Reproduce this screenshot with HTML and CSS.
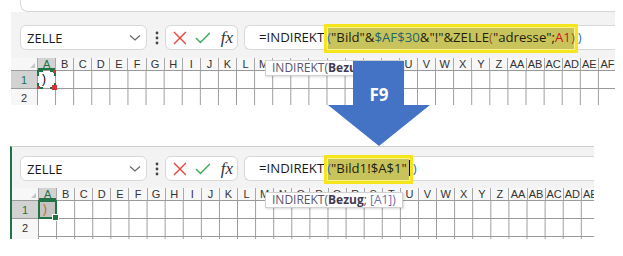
FILE: index.html
```html
<!DOCTYPE html>
<html lang="de">
<head>
  <meta charset="UTF-8" />
  <title>INDIREKT F9</title>
  <link rel="stylesheet" href="styles.css">
</head>
<body>

<div class="shot">
  <div class="ribbon-edge"></div>

  <section class="sheet sheet-top">
    <div class="fbar">
      <div class="namebox">
        <span>ZELLE</span>
        <svg class="chev" width="12" height="8" viewBox="0 0 12 8"><path d="M1 1.5 L6 6 L11 1.5" fill="none" stroke="#666" stroke-width="1.2"/></svg>
      </div>
      <svg class="dots" width="4" height="14" viewBox="0 0 4 14"><circle cx="2" cy="2" r="1.4" fill="#444"/><circle cx="2" cy="7" r="1.4" fill="#444"/><circle cx="2" cy="12" r="1.4" fill="#444"/></svg>
      <div class="fxbox">
        <svg width="14" height="14" viewBox="0 0 14 14"><path d="M1 1 L13 13 M13 1 L1 13" stroke="#e8483f" stroke-width="1.4"/></svg>
        <svg width="16" height="12" viewBox="0 0 16 12"><path d="M1 6 L5.5 10.5 L15 1" fill="none" stroke="#3fa85a" stroke-width="1.4"/></svg>
        <i class="fx">fx</i>
      </div>
      <div class="formula">=INDIREKT<span class="mark"><span class="c-blue">(</span>"Bild"&amp;<span class="c-teal">$AF$30</span>&amp;"!"&amp;ZELLE<span class="c-brown">(</span>"adresse";<span class="c-red">A1</span><span class="c-brown">)</span></span><span class="c-blue close">)</span></div>
    </div>
    <div class="grid">
      <div class="colhead">
        <span class="corner"><i></i></span>
        <span class="sel">A</span><span>B</span><span>C</span><span>D</span><span>E</span><span>F</span><span>G</span><span>H</span><span>I</span><span>J</span><span>K</span><span>L</span><span>M</span><span>N</span><span>O</span><span>P</span><span>Q</span><span>R</span><span>S</span><span>T</span><span>U</span><span>V</span><span>W</span><span>X</span><span>Y</span><span>Z</span><span>AA</span><span>AB</span><span>AC</span><span>AD</span><span>AE</span><span>AF</span>
      </div>
      <div class="rows">
        <div class="rowhead"><span class="sel">1</span><span>2</span></div>
        <div class="cells">
          <div class="a1 a1-edit">)<i class="corner-bl"></i></div>
        </div>
      </div>
    </div>
  </section>

  <section class="sheet sheet-bottom">
    <div class="fbar">
      <div class="namebox">
        <span>ZELLE</span>
        <svg class="chev" width="12" height="8" viewBox="0 0 12 8"><path d="M1 1.5 L6 6 L11 1.5" fill="none" stroke="#666" stroke-width="1.2"/></svg>
      </div>
      <svg class="dots" width="4" height="14" viewBox="0 0 4 14"><circle cx="2" cy="2" r="1.4" fill="#444"/><circle cx="2" cy="7" r="1.4" fill="#444"/><circle cx="2" cy="12" r="1.4" fill="#444"/></svg>
      <div class="fxbox">
        <svg width="14" height="14" viewBox="0 0 14 14"><path d="M1 1 L13 13 M13 1 L1 13" stroke="#e8483f" stroke-width="1.4"/></svg>
        <svg width="16" height="12" viewBox="0 0 16 12"><path d="M1 6 L5.5 10.5 L15 1" fill="none" stroke="#3fa85a" stroke-width="1.4"/></svg>
        <i class="fx">fx</i>
      </div>
      <div class="formula">=INDIREKT<span class="mark"><span class="c-blue">(</span>"Bild1!$A$1"<span class="caret"></span></span><span class="c-blue close">)</span></div>
    </div>
    <div class="grid">
      <div class="colhead">
        <span class="corner"><i></i></span>
        <span class="sel">A</span><span>B</span><span>C</span><span>D</span><span>E</span><span>F</span><span>G</span><span>H</span><span>I</span><span>J</span><span>K</span><span>L</span><span>M</span><span>N</span><span>O</span><span>P</span><span>Q</span><span>R</span><span>S</span><span>T</span><span>U</span><span>V</span><span>W</span><span>X</span><span>Y</span><span>Z</span><span>AA</span><span>AB</span><span>AC</span><span>AD</span><span>AE</span>
      </div>
      <div class="rows">
        <div class="rowhead"><span class="sel">1</span><span>2</span></div>
        <div class="cells">
          <div class="a1 a1-done">)</div>
        </div>
      </div>
    </div>
  </section>

  <!-- overlays -->
  <div class="tip tip-top">INDIREKT(<b>Bezug</b>; <span class="opt">[A1])</span></div>
  <div class="tip tip-bottom">INDIREKT(<b>Bezug</b>; <span class="opt">[A1])</span></div>

  <svg class="arrow" width="102" height="85" viewBox="0 0 102 85">
    <polygon points="25,0 76,0 76,44 102,44 51,85 0,44 25,44" fill="#4472c4"/>
    <text x="51" y="40" text-anchor="middle">F9</text>
  </svg>
</div>

</body>
</html>
```

FILE: styles.css
```css
body {
  margin: 0;
  background: #fff;
  font-family: "Open Sans", "Noto Sans", sans-serif;
  color: #222;
}
.shot {
  position: relative;
  width: 623px;
  height: 256px;
  overflow: hidden;
}
.ribbon-edge {
  height: 12px;
  margin-left: 20px;
  width: 595px;
  box-sizing: border-box;
  border-left: 1px solid #d6d6d6;
  border-bottom: 1px solid #d6d6d6;
  border-bottom-left-radius: 8px;
}
.sheet {
  margin-left: 11px;
  overflow: hidden;
}
.sheet-top {
  width: 604px;
  height: 93px;
}
.sheet-bottom {
  width: 582px;
  height: 92px;
  margin-top: 41px;
  border-left: 2px solid #217346;
  margin-left: 10px;
  border-top: 1px solid #d0d0d0;
}

/* formula bar */
.fbar {
  display: flex;
  align-items: flex-start;
  background: #f3f3f3;
  height: 46px;
  box-sizing: border-box;
  padding: 13px 0 0 9px;
}
.sheet-bottom .fbar {
  height: 41px;
  padding-top: 9px;
  padding-left: 8px;
}
.namebox {
  width: 127px;
  height: 25px;
  box-sizing: border-box;
  background: #fff;
  border: 1px solid #d8d8d8;
  border-radius: 6px;
  display: flex;
  align-items: center;
  justify-content: space-between;
  padding: 0 5px 0 6px;
  font-size: 13px;
  color: #1a1a1a;
}
.dots {
  margin: 6px 6px 0 8px;
}
.fxbox {
  width: 73px;
  height: 25px;
  box-sizing: border-box;
  background: #fff;
  border: 1px solid #d8d8d8;
  border-radius: 6px;
  display: flex;
  align-items: center;
  padding: 0 4px 0 7px;
  gap: 8px;
}
.fx {
  font-family: "Liberation Serif", "DejaVu Serif", serif;
  font-size: 17px;
  color: #333;
  margin-left: 2px;
}
.formula {
  flex: 1;
  height: 25px;
  margin-left: 6px;
  box-sizing: border-box;
  background: #fff;
  border: 1px solid #d8d8d8;
  border-right: none;
  border-radius: 6px 0 0 6px;
  padding-left: 14px;
  font-size: 13.2px;
  line-height: 23px;
  white-space: nowrap;
  color: #1a1a1a;
}
.mark {
  display: inline-block;
  line-height: 17px;
  padding: 2px 0 4px;
  margin-left: 3px;
  background: #c8c45b;
  outline: 3px solid #f5e51c;
  box-shadow: inset 0 0 0 1px #fbf38a;
  color: #1e1e10;
}
.close {
  margin-left: 3px;
}
.c-blue { color: #2c6fc0; }
.c-teal { color: #22656c; }
.c-brown { color: #a5551c; }
.c-red { color: #d4121b; }
.caret {
  display: inline-block;
  width: 1px;
  height: 16px;
  background: #000;
  margin-left: 2px;
  vertical-align: -3px;
}

/* grid */
.grid {
  font-family: "Liberation Sans", Arial, sans-serif;
}
.colhead {
  display: grid;
  grid-template-columns: 26px repeat(32, 18.1px);
  height: 12px;
  background: #f7f7f7;
  font-size: 11px;
  line-height: 12px;
  color: #333;
}
.colhead span {
  text-align: center;
  border-left: 1px solid #a8a8a8;
}
.colhead .corner {
  border-left: none;
  position: relative;
}
.corner i {
  position: absolute;
  right: 2px;
  bottom: 2px;
  width: 0;
  height: 0;
  border-left: 5px solid transparent;
  border-bottom: 5px solid #c6c6c6;
}
.colhead .sel {
  background: #d2d2d2;
  color: #217346;
  box-shadow: inset 0 -2px 0 #217346;
}
.rows {
  display: flex;
}
.rowhead {
  width: 26px;
  background: #f7f7f7;
  font-size: 11px;
  color: #333;
}
.rowhead span {
  display: block;
  height: 18px;
  box-sizing: border-box;
  border-top: 1px solid #9a9a9a;
  text-align: center;
  line-height: 19px;
}
.rowhead .sel {
  background: #d2d2d2;
  color: #217346;
}
.cells {
  flex: 1;
  height: 54px;
  background-image:
    linear-gradient(to right, #9a9a9a 1px, transparent 1px),
    linear-gradient(to bottom, #9a9a9a 1px, transparent 1px);
  background-size: 18.1px 18px;
}
.a1 {
  position: relative;
  width: 19px;
  height: 19px;
  box-sizing: border-box;
  font-size: 12px;
  line-height: 14px;
  padding-left: 3px;
}
.a1-edit {
  border: 2px dashed #217346;
  color: #000;
}
.a1-edit::before,
.a1-edit::after,
.a1-edit .corner-bl {
  content: "";
  position: absolute;
  background: #d13438;
}
.a1-edit::before {
  right: -2px;
  top: -2px;
  width: 3px;
  height: 3px;
}
.a1-edit::after {
  right: -3px;
  bottom: -3px;
  width: 5px;
  height: 5px;
}
.a1-edit .corner-bl {
  left: -2px;
  bottom: -2px;
  width: 3px;
  height: 3px;
}
.a1-done {
  border: 2px solid #217346;
  background: #c4c4c4;
  color: #c0661e;
}
.a1-done::after {
  content: "";
  position: absolute;
  right: -4px;
  bottom: -4px;
  width: 5px;
  height: 5px;
  background: #217346;
  border: 1px solid #fff;
}

/* overlays */
.tip {
  position: absolute;
  left: 265px;
  height: 16px;
  box-sizing: border-box;
  padding: 0 6px;
  background: #fff;
  border: 1px solid #d0d0d0;
  box-shadow: 1px 1px 2px rgba(0,0,0,0.15);
  font-size: 12px;
  line-height: 14px;
  color: #5a5470;
  white-space: nowrap;
}
.tip b {
  color: #3f3a52;
}
.tip .opt {
  color: #6a6fa8;
}
.tip-top { top: 60px; }
.tip-bottom { top: 192px; }
.arrow {
  position: absolute;
  left: 328px;
  top: 61px;
}
.arrow text {
  fill: #fff;
  font-family: "Open Sans", sans-serif;
  font-weight: bold;
  font-size: 17px;
}
```
